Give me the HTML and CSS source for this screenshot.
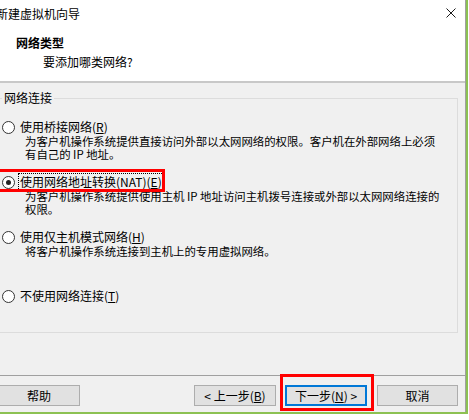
FILE: index.html
```html
<!DOCTYPE html>
<html lang="zh-CN">
<head>
    <meta charset="UTF-8">
    <title>新建虚拟机向导</title>
    <link rel="stylesheet" href="styles.css">
</head>
<body>
    <div class="frame">
        <div class="window">
            <div class="top">
                <div class="titlebar">
                    <span class="title">新建虚拟机向导</span>
                    <svg class="close" viewBox="0 0 10 10"><path d="M0.5 0.5L9.5 9.5M9.5 0.5L0.5 9.5" stroke="#1a1a1a" stroke-width="1" fill="none"/></svg>
                </div>
                <div class="head">
                    <div class="head-title">网络类型</div>
                    <div class="head-sub">要添加哪类网络?</div>
                </div>
            </div>

            <fieldset class="group">
                <legend>网络连接</legend>
                <div class="option">
                    <div class="opt-row"><span class="radio"></span><span class="opt-label">使用桥接网络(<u>R</u>)</span></div>
                    <div class="opt-desc">为客户机操作系统提供直接访问外部以太网网络的权限。客户机在外部网络上必须<br>有自己的 IP 地址。</div>
                </div>
                <div class="option">
                    <div class="opt-row mark"><span class="radio on"></span><span class="opt-label focus">使用网络地址转换(NAT)(<u>E</u>)</span></div>
                    <div class="opt-desc">为客户机操作系统提供使用主机 IP 地址访问主机拨号连接或外部以太网网络连接的<br>权限。</div>
                </div>
                <div class="option">
                    <div class="opt-row"><span class="radio"></span><span class="opt-label">使用仅主机模式网络(<u>H</u>)</span></div>
                    <div class="opt-desc">将客户机操作系统连接到主机上的专用虚拟网络。</div>
                </div>
                <div class="option last">
                    <div class="opt-row"><span class="radio"></span><span class="opt-label">不使用网络连接(<u>T</u>)</span></div>
                </div>
            </fieldset>

            <div class="footer">
                <button class="btn help">帮助</button>
                <button class="btn back">&lt; 上一步(<u>B</u>)</button>
                <button class="btn next">下一步(<u>N</u>) &gt;</button>
                <button class="btn cancel">取消</button>
            </div>
        </div>
    </div>
</body>
</html>
```

FILE: styles.css
```css
body {
    margin: 0;
    background: #fff;
    font-family: "Noto Sans CJK SC", sans-serif;
    font-size: 12px;
    color: #000;
    overflow: hidden;
}
.frame {
    width: 466px;
    border-right: 2px solid #8cc152;
    border-bottom: 2px solid #8cc152;
}
.window {
    width: 465px;
    height: 412px;
    border-right: 1px solid #a0a0a0;
    background: #f0f0f0;
    display: flex;
    flex-direction: column;
    overflow: hidden;
}
.top {
    height: 81px;
    background: #fff;
    border-bottom: 2px solid #c8c8c8;
}
.titlebar {
    height: 28px;
    display: flex;
    align-items: center;
    justify-content: space-between;
    padding-right: 9px;
}
.title {
    margin-left: -4px;
    line-height: 28px;
}
.close {
    width: 10px;
    height: 10px;
    margin-top: -2px;
}
.head {
    padding-left: 16px;
}
.head-title {
    font-weight: bold;
    line-height: 16px;
    margin-top: 7px;
}
.head-sub {
    padding-left: 27px;
    line-height: 16px;
    margin-top: 3px;
}

/* group box */
.group {
    margin: 7px 7px 0 -4px;
    padding: 13px 0 28px 5px;
    border: 1px solid #dcdcdc;
    min-width: 0;
}
.group legend {
    padding: 0 2px;
    line-height: 16px;
}
.option + .option {
    margin-top: 13px;
}
.option.last {
    margin-top: 30px;
}
.opt-row {
    display: flex;
    align-items: center;
    height: 16px;
}
.radio {
    width: 13px;
    height: 13px;
    box-sizing: border-box;
    border: 1px solid #333;
    border-radius: 50%;
    background: #fff;
    flex: none;
    display: flex;
    align-items: center;
    justify-content: center;
}
.radio.on::after {
    content: '';
    width: 5px;
    height: 5px;
    border-radius: 50%;
    background: #222;
}
.opt-label {
    margin-left: 5px;
    line-height: 16px;
}
.opt-label.focus {
    margin-left: 4px;
    padding: 0 1px;
    outline: 1px dotted #000;
}
.opt-desc {
    font-size: 11.4px;
    line-height: 13px;
    padding-left: 23px;
    white-space: nowrap;
}
.mark {
    position: relative;
}
.mark::after {
    content: '';
    position: absolute;
    left: -8px;
    top: -5px;
    width: 171px;
    height: 23px;
    box-sizing: border-box;
    border: 3px solid #f00;
}

/* buttons */
.footer {
    margin-top: auto;
    border-top: 1px solid #a0a0a0;
    padding: 9px 7px 6px 0;
    display: flex;
}
.btn {
    width: 82px;
    height: 21px;
    box-sizing: border-box;
    border: 1px solid #adadad;
    background: #e1e1e1;
    font: inherit;
    color: #000;
    padding: 0;
    line-height: 19px;
    flex: none;
}
.help {
    margin-left: -2px;
}
.back {
    margin-left: auto;
}
.next {
    margin-left: 9px;
    border-color: #0078d7;
    box-shadow: inset 0 0 0 1px #0078d7;
    position: relative;
}
.next::after {
    content: '';
    position: absolute;
    left: -6px;
    top: -12px;
    right: -8px;
    bottom: -6px;
    border: 3px solid #f00;
}
.cancel {
    margin-left: 10px;
    width: 81px;
}
```
